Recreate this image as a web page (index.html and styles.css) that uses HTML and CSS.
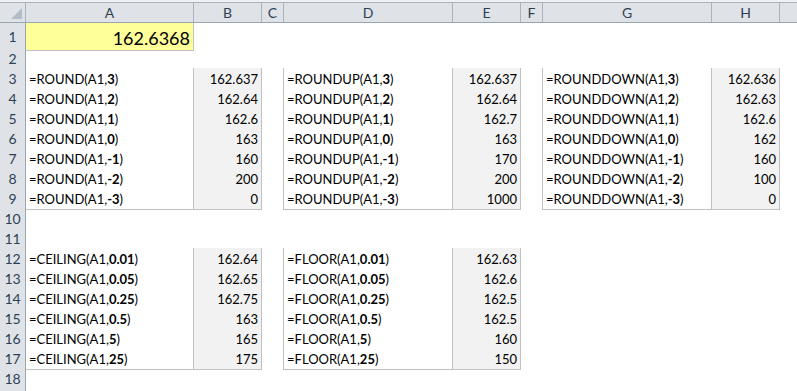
FILE: index.html
```html
<!DOCTYPE html>
<html lang="en">
<head>
    <meta charset="UTF-8">
    <title>Rounding functions</title>
    <link rel="stylesheet" href="styles.css">
</head>
<body>
    <div class="sheet">
        <div class="strip"></div>
        <div class="row colhead">
            <div class="corner"><span class="tri"></span></div>
            <div class="ch">A</div>
            <div class="ch">B</div>
            <div class="ch">C</div>
            <div class="ch">D</div>
            <div class="ch">E</div>
            <div class="ch">F</div>
            <div class="ch">G</div>
            <div class="ch">H</div>
            <div class="ch last"></div>
        </div>

        <div class="row tall">
            <div class="rh">1</div>
            <div class="c big">162.6368</div>
            <div class="c"></div><div class="c"></div><div class="c"></div>
            <div class="c"></div><div class="c"></div><div class="c"></div>
            <div class="c"></div><div class="c"></div>
        </div>

        <div class="row">
            <div class="rh">2</div>
            <div class="c cap"></div><div class="c cap"></div><div class="c"></div>
            <div class="c cap"></div><div class="c cap"></div><div class="c"></div>
            <div class="c cap"></div><div class="c cap"></div><div class="c"></div>
        </div>

        <div class="row">
            <div class="rh">3</div>
            <div class="c t">=ROUND(A1,<b>3</b>)</div>
            <div class="c t n">162.637</div>
            <div class="c edge"></div>
            <div class="c t">=ROUNDUP(A1,<b>3</b>)</div>
            <div class="c t n">162.637</div>
            <div class="c edge"></div>
            <div class="c t">=ROUNDDOWN(A1,<b>3</b>)</div>
            <div class="c t n">162.636</div>
            <div class="c"></div>
        </div>
        <div class="row">
            <div class="rh">4</div>
            <div class="c t">=ROUND(A1,<b>2</b>)</div>
            <div class="c t n">162.64</div>
            <div class="c edge"></div>
            <div class="c t">=ROUNDUP(A1,<b>2</b>)</div>
            <div class="c t n">162.64</div>
            <div class="c edge"></div>
            <div class="c t">=ROUNDDOWN(A1,<b>2</b>)</div>
            <div class="c t n">162.63</div>
            <div class="c"></div>
        </div>
        <div class="row">
            <div class="rh">5</div>
            <div class="c t">=ROUND(A1,<b>1</b>)</div>
            <div class="c t n">162.6</div>
            <div class="c edge"></div>
            <div class="c t">=ROUNDUP(A1,<b>1</b>)</div>
            <div class="c t n">162.7</div>
            <div class="c edge"></div>
            <div class="c t">=ROUNDDOWN(A1,<b>1</b>)</div>
            <div class="c t n">162.6</div>
            <div class="c"></div>
        </div>
        <div class="row">
            <div class="rh">6</div>
            <div class="c t">=ROUND(A1,<b>0</b>)</div>
            <div class="c t n">163</div>
            <div class="c edge"></div>
            <div class="c t">=ROUNDUP(A1,<b>0</b>)</div>
            <div class="c t n">163</div>
            <div class="c edge"></div>
            <div class="c t">=ROUNDDOWN(A1,<b>0</b>)</div>
            <div class="c t n">162</div>
            <div class="c"></div>
        </div>
        <div class="row">
            <div class="rh">7</div>
            <div class="c t">=ROUND(A1,<b>-1</b>)</div>
            <div class="c t n">160</div>
            <div class="c edge"></div>
            <div class="c t">=ROUNDUP(A1,<b>-1</b>)</div>
            <div class="c t n">170</div>
            <div class="c edge"></div>
            <div class="c t">=ROUNDDOWN(A1,<b>-1</b>)</div>
            <div class="c t n">160</div>
            <div class="c"></div>
        </div>
        <div class="row">
            <div class="rh">8</div>
            <div class="c t">=ROUND(A1,<b>-2</b>)</div>
            <div class="c t n">200</div>
            <div class="c edge"></div>
            <div class="c t">=ROUNDUP(A1,<b>-2</b>)</div>
            <div class="c t n">200</div>
            <div class="c edge"></div>
            <div class="c t">=ROUNDDOWN(A1,<b>-2</b>)</div>
            <div class="c t n">100</div>
            <div class="c"></div>
        </div>
        <div class="row">
            <div class="rh">9</div>
            <div class="c t">=ROUND(A1,<b>-3</b>)</div>
            <div class="c t n">0</div>
            <div class="c edge"></div>
            <div class="c t">=ROUNDUP(A1,<b>-3</b>)</div>
            <div class="c t n">1000</div>
            <div class="c edge"></div>
            <div class="c t">=ROUNDDOWN(A1,<b>-3</b>)</div>
            <div class="c t n">0</div>
            <div class="c"></div>
        </div>

        <div class="row">
            <div class="rh">10</div>
        </div>
        <div class="row">
            <div class="rh">11</div>
            <div class="c cap"></div><div class="c cap"></div><div class="c"></div>
            <div class="c cap"></div><div class="c cap"></div>
        </div>

        <div class="row">
            <div class="rh">12</div>
            <div class="c t">=CEILING(A1,<b>0.01</b>)</div>
            <div class="c t n">162.64</div>
            <div class="c edge"></div>
            <div class="c t">=FLOOR(A1,<b>0.01</b>)</div>
            <div class="c t n">162.63</div>
        </div>
        <div class="row">
            <div class="rh">13</div>
            <div class="c t">=CEILING(A1,<b>0.05</b>)</div>
            <div class="c t n">162.65</div>
            <div class="c edge"></div>
            <div class="c t">=FLOOR(A1,<b>0.05</b>)</div>
            <div class="c t n">162.6</div>
        </div>
        <div class="row">
            <div class="rh">14</div>
            <div class="c t">=CEILING(A1,<b>0.25</b>)</div>
            <div class="c t n">162.75</div>
            <div class="c edge"></div>
            <div class="c t">=FLOOR(A1,<b>0.25</b>)</div>
            <div class="c t n">162.5</div>
        </div>
        <div class="row">
            <div class="rh">15</div>
            <div class="c t">=CEILING(A1,<b>0.5</b>)</div>
            <div class="c t n">163</div>
            <div class="c edge"></div>
            <div class="c t">=FLOOR(A1,<b>0.5</b>)</div>
            <div class="c t n">162.5</div>
        </div>
        <div class="row">
            <div class="rh">16</div>
            <div class="c t">=CEILING(A1,<b>5</b>)</div>
            <div class="c t n">165</div>
            <div class="c edge"></div>
            <div class="c t">=FLOOR(A1,<b>5</b>)</div>
            <div class="c t n">160</div>
        </div>
        <div class="row">
            <div class="rh">17</div>
            <div class="c t">=CEILING(A1,<b>25</b>)</div>
            <div class="c t n">175</div>
            <div class="c edge"></div>
            <div class="c t">=FLOOR(A1,<b>25</b>)</div>
            <div class="c t n">150</div>
        </div>

        <div class="row">
            <div class="rh">18</div>
        </div>
        <div class="row">
            <div class="rh"></div>
        </div>
    </div>
</body>
</html>
```

FILE: styles.css
```css
* {
    margin: 0;
    padding: 0;
    box-sizing: border-box;
}

body {
    background: #fff;
    font-family: Lato, "Liberation Sans", sans-serif;
    font-size: 13px;
    color: #000;
    width: 797px;
    height: 391px;
    overflow: hidden;
}

.sheet {
    width: 797px;
}

/* thin band above the column headers */
.strip {
    height: 3px;
    background: #eef1f4;
    border-bottom: 1px solid #aab3bf;
}

.row {
    display: grid;
    grid-template-columns: 26px 168px 68px 22px 169px 68px 22px 169px 68px 1fr;
    height: 20px;
}

.row.tall {
    height: 25px;
}

/* Headers */
.colhead {
    height: 20px;
    background: #dfe3e8;
    border-bottom: 1px solid #9ba6b3;
}

.ch {
    border-right: 1px solid #aab3bf;
    color: #2e3f54;
    font-size: 14px;
    text-align: center;
    line-height: 19px;
}

.ch.last {
    border-right: none;
}

.corner {
    position: relative;
    border-right: 1px solid #aab3bf;
}

.corner .tri {
    position: absolute;
    right: 3px;
    bottom: 3px;
    width: 0;
    height: 0;
    border-left: 11px solid transparent;
    border-bottom: 11px solid #b4bcc6;
}

.rh {
    background: #dfe3e8;
    border-right: 1px solid #9ba6b3;
    border-bottom: 1px solid #c3cad3;
    color: #2e3f54;
    font-size: 14px;
    text-align: center;
    line-height: 21px;
}

.tall .rh {
    line-height: 27px;
}

/* Cells */
.c {
    display: flex;
    align-items: flex-end;
    padding: 0 3px 2px 3px;
    white-space: nowrap;
    overflow: hidden;
    line-height: 16px;
}

.c b {
    font-weight: 700;
}

.big {
    background: #ffff99;
    border-right: 1px solid #c0c0c0;
    border-bottom: 1px solid #c0c0c0;
    justify-content: flex-end;
    font-size: 18px;
    line-height: 20px;
    padding-bottom: 2px;
}

.cap {
    border-bottom: 1px solid #c0c0c0;
}

.edge {
    border-right: 1px solid #c0c0c0;
}

.t {
    background: #fff;
    border-right: 1px solid #c0c0c0;
    border-bottom: 1px solid #c0c0c0;
}

.t.n {
    background: #f2f2f2;
    justify-content: flex-end;
}
```
